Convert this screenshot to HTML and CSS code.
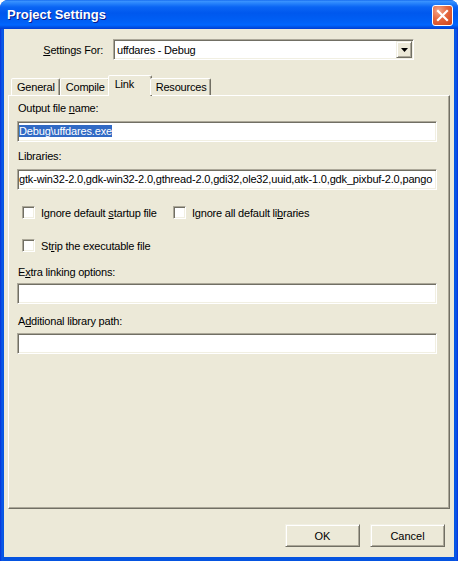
FILE: index.html
```html
<!DOCTYPE html>
<html lang="en">
<head>
    <meta charset="UTF-8">
    <title>Project Settings</title>
    <link rel="stylesheet" href="styles.css">
</head>
<body>
    <div class="window">
        <div class="titlebar">
            <span class="title">Project Settings</span>
            <button class="close">
                <svg width="13" height="13" viewBox="0 0 13 13">
                    <path d="M2 2 L11 11 M11 2 L2 11" stroke="#fff" stroke-width="2.2" stroke-linecap="square"/>
                </svg>
            </button>
        </div>

        <div class="client">
            <div class="settings-row">
                <label><u>S</u>ettings For:</label>
                <div class="combo sunken">
                    <span class="combo-text">uffdares - Debug</span>
                    <span class="drop raised">
                        <svg width="7" height="4" viewBox="0 0 7 4"><path d="M0 0 H7 L3.5 4 Z" fill="#000"/></svg>
                    </span>
                </div>
            </div>

            <div class="tabs">
                <div class="tab">General</div>
                <div class="tab">Compile</div>
                <div class="tab active">Link</div>
                <div class="tab">Resources</div>
            </div>

            <div class="panel">
                <div class="field-label">Output file <u>n</u>ame:</div>
                <div class="textbox sunken"><span class="sel">Debug\uffdares.exe</span></div>

                <div class="field-label gap-lib">Libraries:</div>
                <div class="textbox sunken">gtk-win32-2.0,gdk-win32-2.0,gthread-2.0,gdi32,ole32,uuid,atk-1.0,gdk_pixbuf-2.0,pango</div>

                <div class="check-row first">
                    <div class="check wide"><span class="box sunken"></span><span>Ignore default <u>s</u>tartup file</span></div>
                    <div class="check"><span class="box sunken"></span><span>Ignore all default li<u>b</u>raries</span></div>
                </div>
                <div class="check-row second">
                    <div class="check"><span class="box sunken"></span><span>St<u>r</u>ip the executable file</span></div>
                </div>

                <div class="field-label gap-extra">E<u>x</u>tra linking options:</div>
                <div class="textbox sunken tight"></div>

                <div class="field-label gap-add">A<u>d</u>ditional library path:</div>
                <div class="textbox sunken mid"></div>
            </div>

            <div class="buttons">
                <button class="btn raised">OK</button>
                <button class="btn raised">Cancel</button>
            </div>
        </div>
    </div>
</body>
</html>
```

FILE: styles.css
```css
body {
    margin: 0;
    background: #fff;
    font-family: "Liberation Sans", Arial, sans-serif;
    font-size: 11px;
    letter-spacing: -0.2px;
    color: #000;
}
u {
    text-decoration: underline;
    text-underline-offset: 1px;
}

/* Window frame */
.window {
    width: 458px;
    height: 561px;
    display: flex;
    flex-direction: column;
    background: linear-gradient(to right, #0831d9 0, #0a5ae8 2px, #0553e0 4px, #0553e0 454px, #0a5ae8 456px, #0831d9 100%);
    border-radius: 8px 8px 0 0;
}
.titlebar {
    height: 29px;
    flex: none;
    display: flex;
    justify-content: space-between;
    align-items: flex-start;
    padding: 0 5px 0 7px;
    border-radius: 8px 8px 0 0;
    background: linear-gradient(to bottom, #0a5fea 0, #3d95ff 1px, #2a86fc 3px, #0a65f4 7px, #0058ee 13px, #0060f6 22px, #0066ff 25px, #0052e5 27px, #003dd6 29px);
}
.title {
    margin-top: 7px;
    font-weight: bold;
    font-size: 13px;
    line-height: 16px;
    letter-spacing: 0;
    color: #fff;
    text-shadow: 1px 1px #0a1c8c;
}
.close {
    margin-top: 5px;
    width: 21px;
    height: 21px;
    padding: 0;
    box-sizing: border-box;
    border: 1px solid #fff;
    border-radius: 3px;
    background: radial-gradient(circle at 30% 25%, #f3a78b 0, #e4673f 45%, #cf4217 100%);
    display: flex;
    align-items: center;
    justify-content: center;
}

.client {
    flex: 1;
    margin: 0 4px 4px;
    background: #ece9d8;
    display: flex;
    flex-direction: column;
}

/* 3D borders, classic style */
.sunken {
    border: 1px solid;
    border-color: #aca899 #fff #fff #aca899;
    box-shadow: inset 1px 1px #716f64, inset -1px -1px #f1efe2;
    background: #fff;
}
.raised {
    border: 1px solid;
    border-color: #f1efe2 #716f64 #716f64 #f1efe2;
    box-shadow: inset 1px 1px #fff, inset -1px -1px #aca899;
    background: #ece9d8;
}

/* Settings For row */
.settings-row {
    display: flex;
    align-items: center;
    margin-top: 10px;
}
.settings-row label {
    width: 99px;
    text-align: right;
}
.combo {
    margin-left: 10px;
    width: 301px;
    height: 21px;
    box-sizing: border-box;
    display: flex;
    align-items: center;
}
.combo-text {
    flex: 1;
    padding-left: 3px;
}
.drop {
    width: 16px;
    height: 17px;
    margin-right: 1px;
    box-sizing: border-box;
    display: flex;
    align-items: center;
    justify-content: center;
}

/* Tabs */
.tabs {
    display: flex;
    align-items: flex-end;
    height: 20px;
    margin-top: 15px;
    padding-left: 7px;
    position: relative;
    z-index: 1;
}
.tab {
    height: 17px;
    padding: 0 4px 0 5px;
    box-sizing: border-box;
    border: 1px solid;
    border-bottom: none;
    border-color: #fff #716f64 transparent #fff;
    box-shadow: inset -1px 0 #aca899;
    border-radius: 2px 2px 0 0;
    line-height: 16px;
    background: #ece9d8;
}
.tab.active {
    height: 21px;
    min-width: 44px;
    margin: 0 -2px -1px;
    padding-left: 6px;
    line-height: 17px;
}

/* Tab page */
.panel {
    margin-left: 4px;
    width: 442px;
    height: 414px;
    box-sizing: border-box;
    border: 1px solid;
    border-color: #fff #716f64 #716f64 #fff;
    box-shadow: inset -1px -1px #aca899;
    padding: 6px 0 0 8px;
}
.field-label {
    line-height: 13px;
    padding-left: 1px;
}
.gap-lib { margin-top: 8px; }
.gap-extra { margin-top: 14px; }
.gap-add { margin-top: 11px; }
.textbox {
    margin-top: 6px;
    width: 420px;
    height: 21px;
    box-sizing: border-box;
    padding-left: 1px;
    line-height: 19px;
    letter-spacing: -0.16px;
    white-space: nowrap;
    overflow: hidden;
}
.textbox.tight { margin-top: 4px; }
.textbox.mid { margin-top: 5px; }
.sel {
    background: #316ac5;
    color: #fff;
}

.check-row {
    display: flex;
    align-items: center;
    height: 13px;
    margin-left: 5px;
}
.check-row.first { margin-top: 16px; }
.check-row.second { margin-top: 20px; }
.check {
    display: flex;
    align-items: center;
    gap: 6px;
}
.check.wide { width: 151px; }
.box {
    width: 13px;
    height: 13px;
    box-sizing: border-box;
}

/* Dialog buttons */
.buttons {
    display: flex;
    justify-content: flex-end;
    gap: 10px;
    margin-top: 15px;
    padding-right: 9px;
}
.btn {
    width: 75px;
    height: 23px;
    padding: 0;
    font: inherit;
    color: #000;
}
```
